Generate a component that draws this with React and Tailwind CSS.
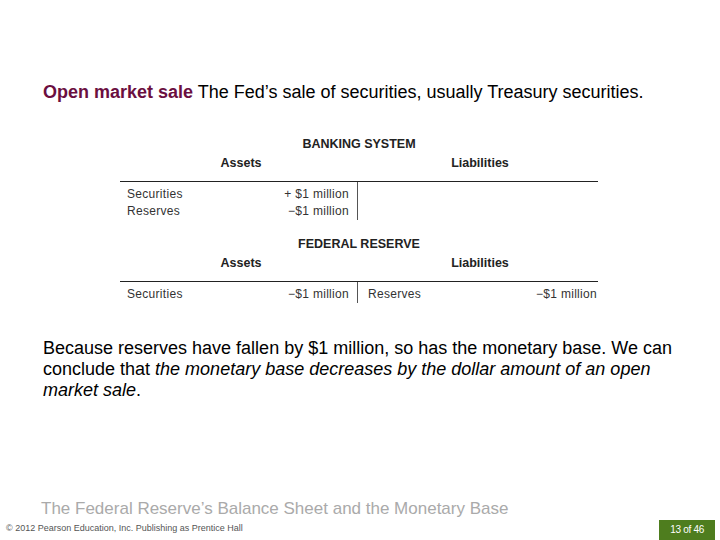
export default function App() {
  const sans = { fontFamily: '"Liberation Sans", Arial, sans-serif' };

  const Sheet = ({ title, left, right }) => (
    <div className="w-[478px] ml-[120px] text-[12px] text-[#333]">
      <div className="h-[19px] leading-[19px] text-center font-bold text-[12.5px] text-[#222]">{title}</div>
      <div className="flex h-[19px] leading-[19px] font-bold text-[12.5px] text-[#222]">
        <div className="w-[242px] text-center">Assets</div>
        <div className="flex-1 text-center">Liabilities</div>
      </div>
      <div className="border-t border-[#222] mt-[8px] flex">
        <div className="w-[238px] border-r border-[#555] pt-[4px] pl-[7px] pr-[8px]">
          {left.map(([k, v]) => (
            <div key={k} className="flex justify-between h-[17px] leading-[17px] tracking-[0.3px]">
              <span>{k}</span>
              <span>{v}</span>
            </div>
          ))}
        </div>
        <div className="flex-1 pt-[4px] pl-[10px] pr-[1px]">
          {right.map(([k, v]) => (
            <div key={k} className="flex justify-between h-[17px] leading-[17px] tracking-[0.3px]">
              <span>{k}</span>
              <span>{v}</span>
            </div>
          ))}
        </div>
      </div>
    </div>
  );

  return (
    <div className="w-[720px] h-[540px] bg-white flex flex-col relative overflow-hidden" style={sans}>
      <p className="mt-[82px] ml-[43px] text-[18px] leading-[21px] text-black">
        <span className="font-bold text-[#6b0f3f]">Open market sale</span> The Fed’s sale of securities, usually Treasury securities.
      </p>

      <div className="mt-[32px]">
        <Sheet
          title="BANKING SYSTEM"
          left={[
            ["Securities", "+ $1 million"],
            ["Reserves", "−$1 million"],
          ]}
          right={[]}
        />
      </div>

      <div className="mt-[15px]">
        <Sheet
          title="FEDERAL RESERVE"
          left={[["Securities", "−$1 million"]]}
          right={[["Reserves", "−$1 million"]]}
        />
      </div>

      <p className="mt-[35px] ml-[43px] mr-[40px] text-[18px] leading-[21px] text-black">
        Because reserves have fallen by $1 million, so has the monetary base. We can conclude that{" "}
        <i>the monetary base decreases by the dollar amount of an open market sale</i>.
      </p>

      <div className="mt-auto ml-[41px] text-[17px] leading-[20px] text-[#aaa]">
        The Federal Reserve’s Balance Sheet and the Monetary Base
      </div>
      <div className="flex items-end justify-between h-[21px]">
        <span className="ml-[6px] mb-[5px] text-[9px] text-[#555]">
          © 2012 Pearson Education, Inc. Publishing as Prentice Hall
        </span>
        <span className="mr-[5px] bg-[#4e7d1e] text-white text-[10px] h-[20px] leading-[20px] px-[11px] tracking-[-0.3px]">
          13 of 46
        </span>
      </div>
    </div>
  );
}
